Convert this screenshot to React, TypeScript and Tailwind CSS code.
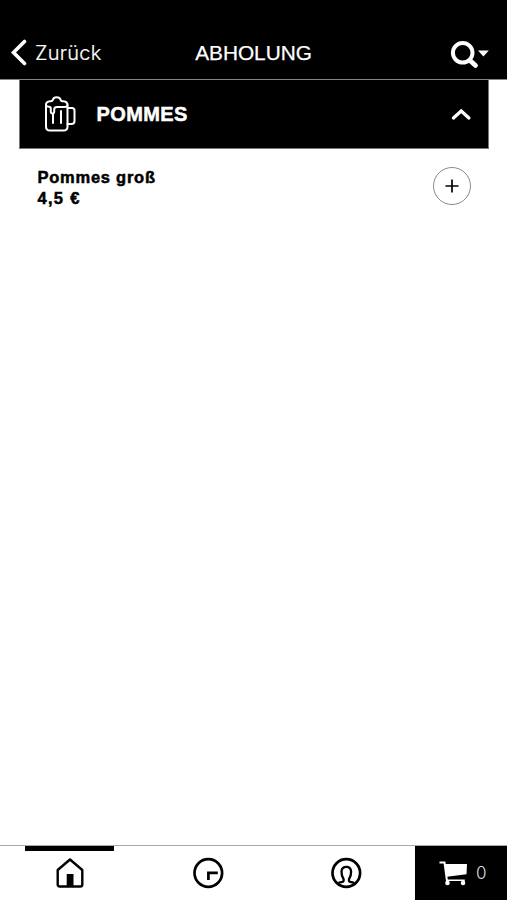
const helvetica = "font-['Liberation_Sans',Arial,sans-serif]";

function BackIcon() {
  return (
    <svg className="h-[28px] w-[18px]" viewBox="0 0 18 28" fill="none" stroke="white" strokeWidth="3.600">
      <path d="M14.500 2.500 L3.500 13.500 L14.500 24.500" strokeLinecap="round" />
    </svg>
  );
}

function SearchMenuIcon() {
  return (
    <svg className="h-[30px] w-[40px]" viewBox="0 0 40 30" fill="none" stroke="white">
      <circle cx="12.700" cy="12.8" r="9.800" strokeWidth="4" />
      <path d="M20 20.5 L25.500 25.500" strokeWidth="4.8" strokeLinecap="round" />
      <path d="M28 10.500 H38.8 L33.4 16.500 Z" fill="white" stroke="none" />
    </svg>
  );
}

function BeerIcon() {
  return (
    <svg className="h-[36px] w-[32px]" viewBox="0 0 32 36" fill="none" stroke="white" strokeWidth="2" strokeLinecap="round" strokeLinejoin="round">
      <path d="M2 9 V30.500 Q2 34.600 6 34.600 H19.500 Q23.500 34.600 23.500 30.500 V9" />
      <path d="M2 9.500 Q1.500 5.500 6.300 5.300 Q8.500 5.400 8.700 4 Q9.500 1.300 12.600 1.300 Q16 1.300 16.700 4 Q17 5.300 19.500 5.300 Q23.700 5.600 23.500 9.500 Q23 11 20.500 11 H12.800 Q10.200 11 10.200 13.500 V15.500 Q10.200 17.400 8.500 17.400 Q6.800 17.400 6.800 15.500 V12 Q6.600 10.700 5 10.700 Q2.500 10.700 2 9.500" />
      <path d="M23.500 12 H28 Q30.500 12 30.500 14.500 V25 Q30.500 28 27.500 28 H23.500" />
      <path d="M9 18 V27 M17 15 V27" />
    </svg>
  );
}

function HomeIcon() {
  return (
    <svg className="h-[30px] w-[28px]" viewBox="0 0 28 30" fill="none" stroke="black" strokeWidth="2.400" strokeLinejoin="round">
      <path d="M1.700 12 L14 1.500 L26.300 12 V26.500 Q26.300 28.500 24.300 28.500 H3.700 Q1.700 28.500 1.700 26.500 Z" />
      <path d="M10.700 28 V16 H17.500 V28 Z" fill="black" stroke="none" />
    </svg>
  );
}

function ClockIcon() {
  return (
    <svg className="h-[32px] w-[32px]" viewBox="0 0 32 32" fill="none" stroke="black" strokeWidth="2.700">
      <circle cx="16.300" cy="16" r="13.800" />
      <path d="M16.400 23 V15.800 H25.800" />
    </svg>
  );
}

function ProfileIcon() {
  return (
    <svg className="h-[32px] w-[32px]" viewBox="0 0 32 32" fill="none" stroke="black" strokeWidth="2.700">
      <circle cx="16.300" cy="16" r="13.800" />
      <path d="M8.300 26 Q9.800 25.400 12.500 24.900 Q13.900 24.500 13.600 22.200 Q11.300 18.500 11.500 14.500 Q11.800 9.800 16.300 9.800 Q20.800 9.800 21.100 14.500 Q21.300 18.500 19 22.200 Q18.700 24.500 20.100 24.900 Q22.800 25.400 24.300 26" strokeWidth="2.300" />
    </svg>
  );
}

function CartIcon() {
  return (
    <svg className="h-[25px] w-[29px]" viewBox="0 0 29 25" fill="none" stroke="white" strokeWidth="1.500">
      <path d="M0.500 1.500 H5.500 L8.200 21.500" strokeWidth="2" />
      <path d="M5.500 3 H28 L27.500 13.200 L7.800 15.800 Z" fill="white" stroke="none" />
      <path d="M8 19.300 H25 V21" />
      <circle cx="8.500" cy="22" r="2.300" fill="white" stroke="none" />
      <circle cx="24" cy="22" r="2.300" fill="white" stroke="none" />
    </svg>
  );
}

export default function App() {
  return (
    <div className={`flex h-[900px] w-[507px] flex-col overflow-hidden bg-white text-black ${helvetica}`}>
      <header className="grid h-[80px] shrink-0 grid-cols-3 items-center border-b border-[#858585] bg-black pt-[26px] text-white">
        <button className="flex items-center pl-[10px]">
          <BackIcon />
          <span className="ml-[7px] font-['Inter',sans-serif] text-[20px] leading-7 font-light tracking-[0.3px] [-webkit-text-stroke:0.2px_white]">Zurück</span>
        </button>
        <h1 className="text-center text-[20.800px] leading-7 [-webkit-text-stroke:0.25px_white]">ABHOLUNG</h1>
        <button className="flex justify-end pt-[4px] pr-[17px]">
          <SearchMenuIcon />
        </button>
      </header>

      <main className="flex-1">
        <section className="mr-[18px] ml-[19px]">
          <button className="flex h-[69px] w-full items-center border-r border-b border-l border-[#777] bg-black pl-[24px] pr-[17px] text-white">
            <BeerIcon />
            <span className="ml-[20.500px] text-[20px] font-bold tracking-[0.4px] [-webkit-text-stroke:0.5px_white]">POMMES</span>
            <svg className="ml-auto h-[12px] w-[20px]" viewBox="0 0 20 12" fill="none" stroke="white" strokeWidth="3.200" strokeLinecap="round">
              <path d="M2.500 10 L10.200 3 L17.900 10" />
            </svg>
          </button>
          <div className="flex items-start justify-between pt-[18px] pr-[18px] pl-[18.500px]">
            <div className="text-[16.500px] leading-[20.500px] font-bold tracking-[0.750px] [-webkit-text-stroke:0.5px_black]">
              <p>Pommes groß</p>
              <p className="tracking-[1.300px]">4,5 €</p>
            </div>
            <button className="flex h-[38px] w-[38px] items-center justify-center rounded-full border border-[#8a8a8a]">
              <svg className="h-[14px] w-[14px]" viewBox="0 0 14 14" stroke="black" strokeWidth="1.700">
                <path d="M7 0.500 V13.500 M0.500 7 H13.500" />
              </svg>
            </button>
          </div>
        </section>
      </main>

      <nav className="flex h-[55px] shrink-0 border-t border-[#aaa]">
        <div className="flex w-[139px] flex-col items-center">
          <div className="h-[5px] w-[89px] bg-black" />
          <div className="mt-[7px]"><HomeIcon /></div>
        </div>
        <div className="flex w-[138px] items-center justify-center"><ClockIcon /></div>
        <div className="flex w-[138px] items-center justify-center"><ProfileIcon /></div>
        <div className="flex flex-1 items-center bg-black pt-px pl-[24px] text-white">
          <CartIcon />
          <span className="ml-[8px] font-['Inter',sans-serif] text-[17px] font-light text-[#ddd]">0</span>
        </div>
      </nav>
    </div>
  );
}
